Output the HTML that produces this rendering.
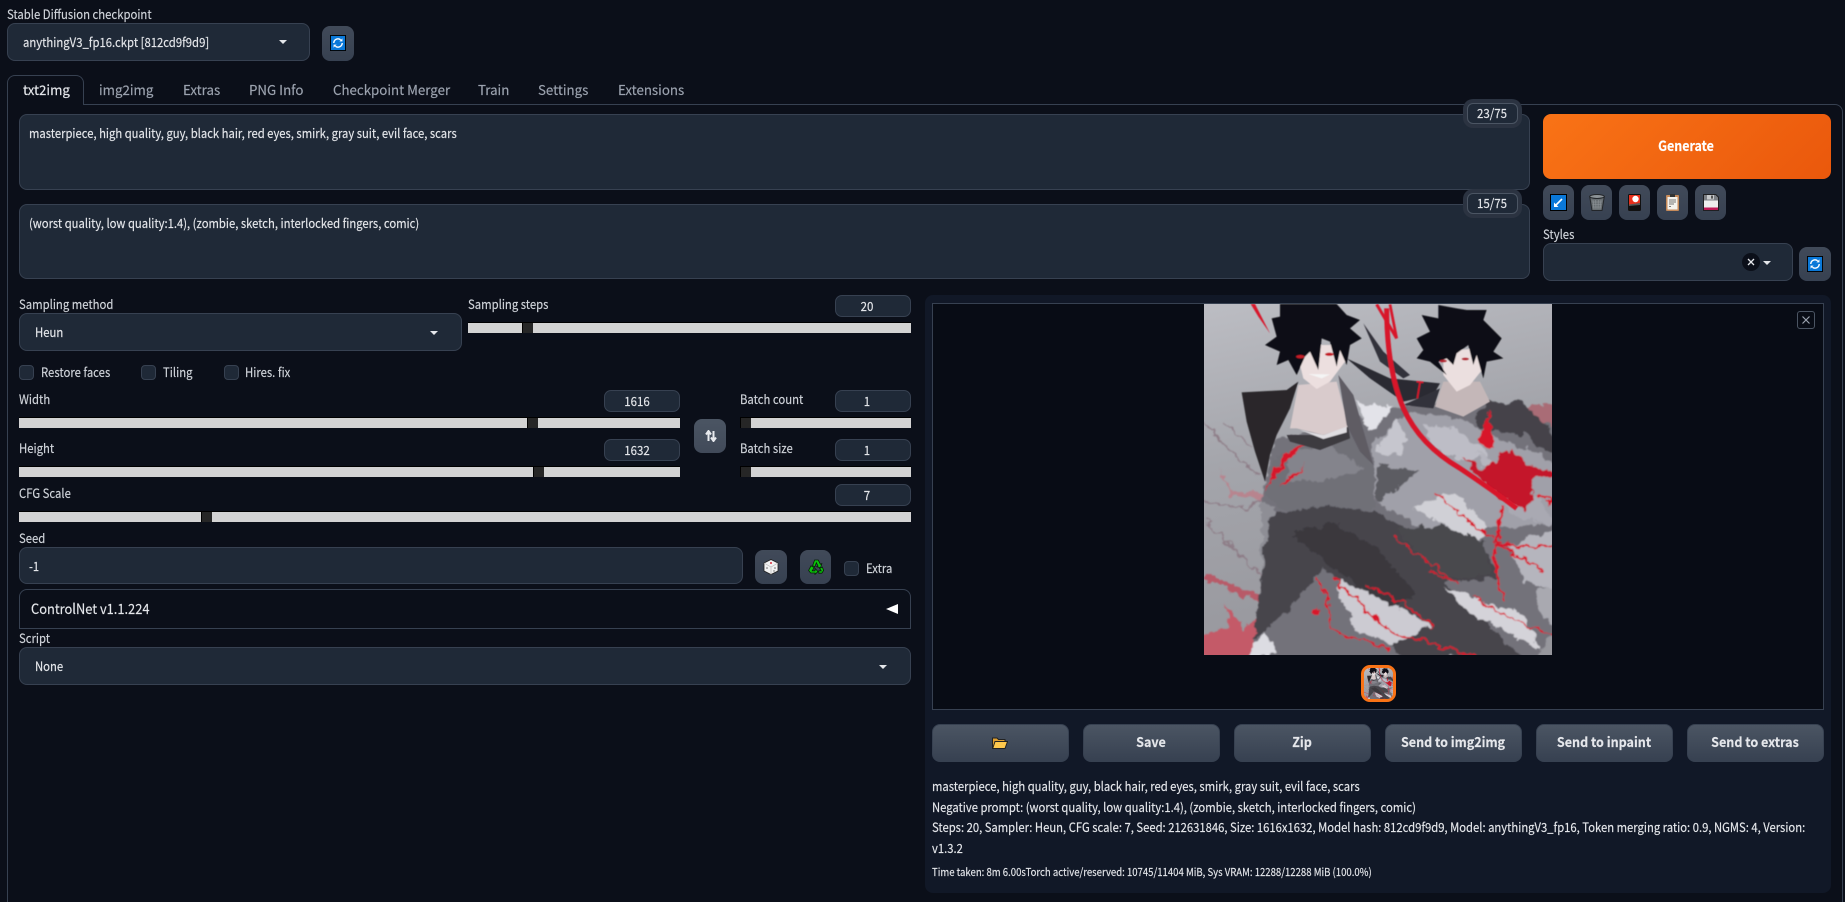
<!DOCTYPE html>
<html lang="en"><head><meta charset="utf-8"><title>Stable Diffusion</title>
<style>
html,body{margin:0;padding:0;background:#0b0f19;width:1845px;height:902px;overflow:hidden}
body{position:relative;font-family:"Noto Sans CJK SC","Liberation Sans",sans-serif;color:#d1d5db;font-size:12.5px}
div,svg,span{position:absolute;box-sizing:border-box}
.t{white-space:nowrap;line-height:20px;height:20px;-webkit-text-stroke:.15px currentColor}
.l{color:#d1d5db;font-size:12.5px;transform:scaleX(.905);transform-origin:0 50%}
.tab{color:#9ca3af;font-size:13.5px;transform:scaleX(.985);transform-origin:0 50%}
.box{background:#1f2937;border:1px solid #374151;border-radius:8px}
.num{background:#1f2937;border:1px solid #374151;border-radius:7px;height:22px;width:76px}
.val{color:#e5e7eb;font-size:12.5px;transform:translateX(-50%) scaleX(.92)}
.btn{border:1px solid #374151;border-radius:8px;background:linear-gradient(180deg,#4b5563,#374151)}
.ib{border-radius:8px;background:linear-gradient(180deg,#414a59,#374151)}
.cb{width:15px;height:15px;background:#1f2937;border:1px solid #374151;border-radius:4px}
.tr{height:11px;background:#d3d3d3;border-top:1px solid #000}
.th{width:11px;height:11px;background:#262626;border-left:1px solid #000;border-top:1px solid #000}
.arr{width:0;height:0;border-left:4px solid transparent;border-right:4px solid transparent;border-top:4px solid #e5e7eb}
.bt{font-weight:700;color:#e5e7eb;font-size:13.5px;transform:translateX(-50%) scaleX(.93)}
.cnt{background:#1f2937;border:1px solid #4b5563;border-radius:6px;width:51px;height:21px;box-shadow:0 0 0 4px #2b3341}
.info{color:#e5e7eb;font-size:12.5px;transform:scaleX(.9);transform-origin:0 50%}
</style></head><body>
<svg width="0" height="0" style="left:0;top:0">
<defs>
<linearGradient id="bg" x1="0" y1="0" x2="0.2" y2="1"><stop offset="0" stop-color="#bcbdc3"/><stop offset=".45" stop-color="#a4a5ab"/><stop offset="1" stop-color="#97979d"/></linearGradient>
<filter id="sb" x="-3%" y="-3%" width="106%" height="106%"><feTurbulence type="fractalNoise" baseFrequency=".035" numOctaves="3" seed="7" result="n"/><feDisplacementMap in="SourceGraphic" in2="n" scale="34" xChannelSelector="R" yChannelSelector="G"/><feGaussianBlur stdDeviation="2"/></filter>
<filter id="hb" x="-3%" y="-3%" width="106%" height="106%"><feGaussianBlur stdDeviation="1.4"/></filter>
<symbol id="art" viewBox="42 27 1044 1053" preserveAspectRatio="none">
<rect x="42" y="27" width="1044" height="1053" fill="url(#bg)"/>
<g filter="url(#sb)">
<g fill="none" stroke="#8d7c86" stroke-width="5"><path d="M42 380L120 470L210 545"/><path d="M42 620L170 640L220 610"/><path d="M42 670L150 780L215 840"/><path d="M110 380L190 460"/></g>
<path d="M85 520L130 590L220 590L215 615L125 600Z" fill="#b8848e"/>
<path d="M42 835L215 905L215 925L42 855Z" fill="#b85a68"/>
<path d="M30 1090V1015L120 1000L105 930L160 1000L232 945L220 1040L400 1030L540 1090Z" fill="#c45a68"/>
<path d="M1000 335H1100V430L1030 370Z" fill="#a96c76"/>
<path d="M215 600L260 430L480 390L560 340L700 330L900 320L1100 400V1000L1040 1090H200L190 1040L260 920L215 900Z" fill="#73727a"/>
<path d="M215 620L260 640L250 900L215 900Z" fill="#8e8e95"/>
<path d="M545 450L650 350L800 370L950 440L1100 500V680L960 700L700 700L560 620Z" fill="#a0a0a9"/>
<path d="M560 470L620 370L650 420L640 480Z" fill="#c6c6ce"/>
<path d="M700 390L800 400L900 480L820 500L730 460Z" fill="#bdbdc6"/>
<path d="M665 640L790 590L900 700L860 735Z" fill="#d0d0d6"/>
<path d="M860 470L1010 530L1010 590L900 540Z" fill="#b5b5be"/>
<path d="M930 590L1040 600L1100 690L960 660Z" fill="#a9a9b2"/>
<path d="M960 750L1100 700V890L1000 860Z" fill="#b5b5bd"/>
<path d="M260 480L400 440L480 400L550 510L555 640L300 660L225 600Z" fill="#706f77"/>
<path d="M300 470L420 450L520 520L400 560L290 560Z" fill="#84848c"/>
<path d="M560 510L690 530L560 620Z" fill="#5c5b62"/>
<path d="M240 660L400 630L560 650L700 730L800 720L880 760L930 850L760 860L1000 1090H640L470 880L400 820L300 940L190 1040L220 800Z" fill="#47454b"/>
<path d="M620 700L760 690L880 740L900 840L760 850Z" fill="#4a484e"/>
<path d="M300 720L430 680L560 760L680 900L600 940L450 830Z" fill="#3a383d"/>
<path d="M190 1060L225 1015L262 1075L175 1090Z" fill="#dcdce2"/>
<path d="M450 850L520 885L725 990L610 1052L500 1000L440 900Z" fill="#cccbd2"/>
<path d="M760 880L900 925L1000 950L1050 1070L1000 1040L850 960Z" fill="#d4d3d9"/>
<path d="M1040 880H1100V1000L1040 950Z" fill="#a9a9b0"/>
<path d="M500 320L610 330L560 400L540 410Z" fill="#e3e3e9"/>
<path d="M850 360L900 320L1000 320L1100 430V490L1000 420L870 400Z" fill="#44434a"/>
<g fill="#d8142a">
<path d="M820 490L880 520L960 460L1020 510L1100 545L1020 550L1030 610L1000 650L960 620L900 580L860 540Z" fill="#c4162a"/>
<path d="M865 450L900 340L905 450L915 462Z"/>
<path d="M222 590L280 480L360 430L300 490Z"/>
<path d="M265 575L345 505L300 560Z"/>
<path d="M360 955L385 930L390 965Z"/>
</g>
<g fill="none" stroke="#d8142a">
<path d="M730 590Q830 680 910 730" stroke-width="6"/>
<path d="M935 630L912 800L940 920" stroke-width="9"/>
<path d="M910 745L1100 760" stroke-width="7"/>
<path d="M920 740L1060 830" stroke-width="7"/>
<path d="M1040 600L1100 625" stroke-width="9"/>
<path d="M430 850Q520 930 600 1010Q700 1040 880 1090" stroke-width="7"/>
<path d="M530 870Q640 920 730 990" stroke-width="6"/>
<path d="M610 730Q720 800 790 860" stroke-width="4"/>
<path d="M850 900Q950 980 1100 1020" stroke-width="5"/>
<path d="M380 850Q430 930 420 1000Q500 1040 600 1060" stroke-width="5"/>
<path d="M720 830L800 860" stroke-width="4"/>
</g>
</g>
<g filter="url(#hb)">
<path d="M300 400L325 270L440 260L475 395L400 420L320 400Z" fill="#d9cbcc"/>
<path d="M290 420L400 420L475 395L480 430L390 465L300 440Z" fill="#3c3a40"/>
<path d="M330 405L400 420L470 395L470 412L400 432Z" fill="#e0dee2"/>
<path d="M155 292L290 285L325 260L300 340L260 420L240 480L225 560L195 470L170 380Z" fill="#29282c"/>
<path d="M445 240L490 300L550 510L510 470L470 390Z" fill="#5e5c64"/>
<path d="M470 190L600 250L750 265L730 300L640 320L540 250Z" fill="#2a2a32"/>
<path d="M520 85L580 170L660 240L640 250L570 200Z" fill="#33303a"/>
<path d="M735 335L760 260L870 260L900 320L820 365Z" fill="#c4b7b8"/>
<path d="M640 330L750 280L730 340Z" fill="#33323a"/>
<path d="M315 150H460L465 200L420 260L380 282L340 250Z" fill="#ecdfdf"/>
<path d="M270 27H440L470 60L510 75L480 100L515 130L480 150L470 210L450 165L440 215L420 140L395 130L385 225L360 170L345 185L320 240L295 195L260 210L270 170L225 150L260 125L245 70L270 65Z" fill="#0f0f13"/>
<ellipse cx="331" cy="185" rx="13" ry="5" fill="#c41a28"/><ellipse cx="418" cy="178" rx="13" ry="5" fill="#c41a28"/>
<path d="M355 237L420 238L395 250Z" fill="#f4f4f4"/>
<path d="M760 170L860 160L880 220L840 270L800 290L760 240Z" fill="#ebdfdf"/>
<path d="M800 40L830 45L890 45L880 75L935 130L910 170L940 190L890 200L880 250L860 180L850 210L835 150L800 175L790 210L770 190L745 200L770 240L720 200L680 190L700 165L680 130L720 110L695 60L745 70L745 30Z" fill="#0f0f13"/>
<ellipse cx="760" cy="198" rx="11" ry="4" fill="#b4202e"/><ellipse cx="826" cy="192" rx="11" ry="4" fill="#b4202e"/>
<path d="M182 27L195 27L240 115L205 65Z" fill="#d8142a"/>
<g fill="none" stroke="#d8142a">
<path d="M590 40Q590 220 640 340Q690 450 810 520Q900 580 980 640" stroke-width="15"/>
<path d="M560 28L620 130" stroke-width="9"/>
<path d="M600 28L620 130" stroke-width="8"/>
<path d="M680 260L700 262M690 262L682 310" stroke-width="5"/>
</g>
</g>
</symbol>
<symbol id="refresh" viewBox="0 0 17 17"><rect width="17" height="17" fill="#000"/><rect x="1" y="1" width="15" height="15" fill="#0a78d8"/><g fill="none" stroke="#fff" stroke-width="1.5"><path d="M4 8.5a4.5 4.5 0 0 1 7.3-3.4"/><path d="M13 8.5a4.5 4.5 0 0 1-7.3 3.4"/></g><path d="M10 6.8h3.2V3.6z M7 10.2H3.8v3.2z" fill="#fff"/></symbol>
</defs></svg>

<div class="t l" style="left:7px;top:4px">Stable Diffusion checkpoint</div>
<div class="box" style="left:7px;top:23px;width:303px;height:38px"></div>
<div class="t l" style="left:23px;top:32px;color:#e5e7eb">anythingV3_fp16.ckpt [812cd9f9d9]</div>
<div class="arr" style="left:279px;top:40px"></div>
<div class="ib" style="left:322px;top:26px;width:32px;height:35px"></div>
<svg width="16" height="16" style="left:330px;top:35px"><use href="#refresh" width="16" height="16"/></svg>

<!-- tabs -->
<div style="left:7px;top:104px;width:1836px;height:810px;border:1px solid #374151;border-radius:0 8px 8px 8px"></div>
<div style="left:7px;top:75px;width:77px;height:30px;background:#0b0f19;border:1px solid #374151;border-bottom:none;border-radius:8px 8px 0 0"></div>
<div class="t tab" style="left:23px;top:79px;color:#e5e7eb">txt2img</div>
<div class="t tab" style="left:99px;top:79px">img2img</div>
<div class="t tab" style="left:183px;top:79px">Extras</div>
<div class="t tab" style="left:249px;top:79px">PNG Info</div>
<div class="t tab" style="left:333px;top:79px">Checkpoint Merger</div>
<div class="t tab" style="left:478px;top:79px">Train</div>
<div class="t tab" style="left:538px;top:79px">Settings</div>
<div class="t tab" style="left:618px;top:79px">Extensions</div>

<!-- prompts -->
<div class="box" style="left:19px;top:114px;width:1511px;height:76px"></div>
<div class="t info" style="left:29px;top:123px">masterpiece, high quality, guy, black hair, red eyes, smirk, gray suit, evil face, scars</div>
<div class="box" style="left:19px;top:204px;width:1511px;height:75px"></div>
<div class="t info" style="left:29px;top:213px">(worst quality, low quality:1.4), (zombie, sketch, interlocked fingers, comic)</div>
<div class="cnt" style="left:1467px;top:103px"></div>
<div class="t val" style="left:1492px;top:103px">23/75</div>
<div class="cnt" style="left:1467px;top:193px"></div>
<div class="t val" style="left:1492px;top:193px">15/75</div>

<!-- generate -->
<div style="left:1543px;top:114px;width:288px;height:65px;border-radius:8px;background:linear-gradient(135deg,#f97316,#ea580c)"></div>
<div class="t" style="left:1686px;top:136px;transform:translateX(-50%) scaleX(.89);font-weight:700;color:#fff;font-size:14px">Generate</div>

<div class="ib" style="left:1543px;top:185px;width:31px;height:35px"></div>
<div class="ib" style="left:1581px;top:185px;width:31px;height:35px"></div>
<div class="ib" style="left:1619px;top:185px;width:31px;height:35px"></div>
<div class="ib" style="left:1657px;top:185px;width:31px;height:35px"></div>
<div class="ib" style="left:1695px;top:185px;width:31px;height:35px"></div>
<svg width="17" height="17" viewBox="0 0 17 17" style="left:1550px;top:194px"><rect width="17" height="17" fill="#000"/><rect x="1" y="1" width="15" height="15" fill="#0a78d8"/><path d="M12 5L6 11" stroke="#fff" stroke-width="1.6"/><path d="M4 13V8.5L8.5 13Z" fill="#fff"/></svg>
<svg width="16" height="17" viewBox="0 0 16 17" style="left:1589px;top:194px"><path d="M.7 2.5L3 16.5H13L15.3 2.5Z" fill="#686e72" stroke="#23262a"/><ellipse cx="8" cy="2.5" rx="7.3" ry="2" fill="#8d9397" stroke="#23262a"/><path d="M4 6L5 15M6.7 6L7 15M9.3 6L9 15M12 6L11 15M3 8H13M3.5 10.5H12.5M4 13H12" stroke="#8e9498" stroke-width=".6"/></svg>
<svg width="13" height="17" viewBox="0 0 13 17" style="left:1628px;top:194px"><rect width="13" height="17" rx="1.5" fill="#111"/><rect x="1" y="1" width="11" height="9.5" fill="#e8301c"/><circle cx="7.5" cy="5" r="3.2" fill="#fff"/><path d="M1 10.5L12 9V11L1 12Z" fill="#555"/></svg>
<svg width="13" height="17" viewBox="0 0 13 17" style="left:1666px;top:194px"><rect y="1" width="13" height="16" rx="1" fill="#c58a5a"/><rect x="1.5" y="3" width="10" height="12.5" fill="#f5f3ee"/><rect x="4" width="5" height="3" fill="#333"/><path d="M3 6H10M3 8H10M3 10H8M3 12.5H5" stroke="#777" stroke-width="1"/></svg>
<svg width="16" height="17" viewBox="0 0 16 17" style="left:1703px;top:194px"><path d="M0 0H13L16 3V17H0Z" fill="#1f1f22"/><path d="M1 1H12.5L15 3.5V6.5H1Z" fill="#7c7f84"/><rect x="4" y="1" width="7" height="4.5" fill="#c8cacc"/><rect x="8" y="1.6" width="2" height="3" fill="#555"/><rect x="1" y="6.5" width="14" height="7" fill="#eeeeee"/><rect x="1" y="13.5" width="14" height="2.5" fill="#c01a58"/></svg>

<div class="t l" style="left:1543px;top:224px">Styles</div>
<div class="box" style="left:1543px;top:243px;width:250px;height:38px"></div>
<div style="left:1742px;top:253px;width:18px;height:18px;border-radius:50%;background:#0b0f19"></div>
<svg width="8" height="8" viewBox="0 0 8 8" style="left:1747px;top:258px"><path d="M1 1L7 7M7 1L1 7" stroke="#e5e7eb" stroke-width="1.3"/></svg>
<div class="arr" style="left:1763px;top:261px"></div>
<div class="ib" style="left:1799px;top:247px;width:32px;height:34px"></div>
<svg width="16" height="16" style="left:1807px;top:256px"><use href="#refresh" width="16" height="16"/></svg>

<!-- left column -->
<div class="t l" style="left:19px;top:294px">Sampling method</div>
<div class="box" style="left:19px;top:313px;width:443px;height:38px"></div>
<div class="t l" style="left:35px;top:322px;color:#e5e7eb">Heun</div>
<div class="arr" style="left:430px;top:331px"></div>
<div class="t l" style="left:468px;top:294px">Sampling steps</div>
<div class="num" style="left:835px;top:295px"></div>
<div class="t val" style="left:867px;top:296px">20</div>
<div class="tr" style="left:468px;top:322px;width:443px"></div>
<div class="th" style="left:522px;top:322px"></div>

<div class="cb" style="left:19px;top:365px"></div><div class="t l" style="left:41px;top:362px">Restore faces</div>
<div class="cb" style="left:141px;top:365px"></div><div class="t l" style="left:163px;top:362px">Tiling</div>
<div class="cb" style="left:224px;top:365px"></div><div class="t l" style="left:245px;top:362px">Hires. fix</div>

<div class="t l" style="left:19px;top:389px">Width</div>
<div class="num" style="left:604px;top:390px"></div>
<div class="t val" style="left:637px;top:391px">1616</div>
<div class="tr" style="left:19px;top:417px;width:661px"></div>
<div class="th" style="left:527px;top:417px"></div>

<div class="t l" style="left:19px;top:438px">Height</div>
<div class="num" style="left:604px;top:439px"></div>
<div class="t val" style="left:637px;top:440px">1632</div>
<div class="tr" style="left:19px;top:466px;width:661px"></div>
<div class="th" style="left:533px;top:466px"></div>

<div class="ib" style="left:694px;top:419px;width:32px;height:34px;background:linear-gradient(180deg,#4b5563,#414a59)"></div>
<svg width="12" height="12" viewBox="0 0 12 12" style="left:705px;top:430px"><path d="M3.5 11V3M1 4.5L3.5 1L6 4.5M8.5 1V9M6 7.5L8.5 11L11 7.5" fill="none" stroke="#e8eaee" stroke-width="2"/></svg>

<div class="t l" style="left:740px;top:389px">Batch count</div>
<div class="num" style="left:835px;top:390px"></div>
<div class="t val" style="left:867px;top:391px">1</div>
<div class="tr" style="left:740px;top:417px;width:171px"></div>
<div class="th" style="left:740px;top:417px"></div>
<div class="t l" style="left:740px;top:438px">Batch size</div>
<div class="num" style="left:835px;top:439px"></div>
<div class="t val" style="left:867px;top:440px">1</div>
<div class="tr" style="left:740px;top:466px;width:171px"></div>
<div class="th" style="left:740px;top:466px"></div>

<div class="t l" style="left:19px;top:483px">CFG Scale</div>
<div class="num" style="left:835px;top:484px"></div>
<div class="t val" style="left:867px;top:485px">7</div>
<div class="tr" style="left:19px;top:511px;width:892px"></div>
<div class="th" style="left:201px;top:511px"></div>

<div class="t l" style="left:19px;top:528px">Seed</div>
<div class="box" style="left:19px;top:547px;width:724px;height:37px"></div>
<div class="t l" style="left:29px;top:556px;color:#e5e7eb">-1</div>
<div class="ib" style="left:755px;top:550px;width:32px;height:34px"></div>
<svg width="16" height="16" viewBox="0 0 16 16" style="left:763px;top:559px"><path d="M8 .5L15 4V12L8 15.5L1 12V4Z" fill="#f2f2f2" stroke="#222" stroke-width=".8"/><path d="M1 4L8 8L15 4M8 8V15.5" stroke="#b8b8b8" stroke-width=".7" fill="none"/><circle cx="8" cy="4" r="1" fill="#d8303c"/><circle cx="4" cy="9" r=".8" fill="#666"/><circle cx="12" cy="9" r=".8" fill="#666"/><circle cx="11" cy="12" r=".7" fill="#666"/></svg>
<div class="ib" style="left:800px;top:550px;width:31px;height:34px"></div>
<svg width="16" height="16" viewBox="0 0 16 16" style="left:808px;top:559px"><g fill="#0ac40a" stroke="#062006" stroke-width=".8"><path d="M4.6 6.6L6.6 1H10.2L12.4 5.2L13.8 4.6L12.6 8.8L8.6 7.8L10 7.1L8.4 3.8L6.8 7.8Z"/><path d="M.6 11.4L3 6.8L6.2 8.6L4.2 11.8H7V9.4L10 12.6L7 15.4V14H2.6Z"/><path d="M10.8 14.2V11.8H13.2L11.6 9.4L14.4 8L15.6 11.5L13.8 14.2Z"/></g></svg>
<div class="cb" style="left:844px;top:561px"></div><div class="t l" style="left:866px;top:558px">Extra</div>

<div style="left:19px;top:589px;width:892px;height:40px;border:1px solid #374151;border-radius:8px 8px 0 0"></div>
<div class="t" style="left:31px;top:599px;color:#e5e7eb;font-size:14px;transform:scaleX(.918);transform-origin:0 50%">ControlNet v1.1.224</div>
<div style="left:886px;top:603.5px;width:0;height:0;border-top:5.5px solid transparent;border-bottom:5.5px solid transparent;border-right:12px solid #fff"></div>

<div class="t l" style="left:19px;top:628px">Script</div>
<div class="box" style="left:19px;top:647px;width:892px;height:38px"></div>
<div class="t l" style="left:35px;top:656px;color:#e5e7eb">None</div>
<div class="arr" style="left:879px;top:665px"></div>

<!-- right panel -->
<div style="left:925px;top:295px;width:906px;height:598px;background:#111827;border-radius:8px"></div>
<div style="left:932px;top:303px;width:892px;height:407px;background:#080c15;border:1px solid #374151"></div>
<svg width="348" height="351" style="left:1204px;top:304px"><use href="#art" width="348" height="351"/></svg>
<div style="left:1797px;top:311px;width:18px;height:18px;border:1px solid #4b5563;border-radius:3px"></div>
<svg width="8" height="8" viewBox="0 0 8 8" style="left:1802px;top:316px"><path d="M.5 .5L7.5 7.5M7.5 .5L.5 7.5" stroke="#9ca3af" stroke-width="1.2"/></svg>
<div style="left:1361px;top:665px;width:35px;height:37px;border:3px solid #f97316;border-radius:9px;overflow:hidden;background:#9a9aa0"><svg width="29" height="31" style="left:0;top:0"><use href="#art" width="29" height="31"/></svg></div>

<div class="btn" style="left:932px;top:724px;width:137px;height:38px"></div>
<svg width="16" height="12" viewBox="0 0 16 12" style="left:992px;top:737px"><path d="M.5 11.5V1H5L6.5 2.5H13V4" fill="#e0a030" stroke="#222"/><path d="M.7 11.5L3 4.5H15.5L13 11.5Z" fill="#ffc94d" stroke="#222"/></svg>
<div class="btn" style="left:1083px;top:724px;width:137px;height:38px"></div>
<div class="t bt" style="left:1151px;top:731px">Save</div>
<div class="btn" style="left:1234px;top:724px;width:137px;height:38px"></div>
<div class="t bt" style="left:1302px;top:731px">Zip</div>
<div class="btn" style="left:1385px;top:724px;width:137px;height:38px"></div>
<div class="t bt" style="left:1453px;top:731px">Send to img2img</div>
<div class="btn" style="left:1536px;top:724px;width:137px;height:38px"></div>
<div class="t bt" style="left:1604px;top:731px">Send to inpaint</div>
<div class="btn" style="left:1687px;top:724px;width:137px;height:38px"></div>
<div class="t bt" style="left:1755px;top:731px">Send to extras</div>

<div class="t info" style="left:932px;top:776px">masterpiece, high quality, guy, black hair, red eyes, smirk, gray suit, evil face, scars</div>
<div class="t info" style="left:932px;top:797px">Negative prompt: (worst quality, low quality:1.4), (zombie, sketch, interlocked fingers, comic)</div>
<div class="t info" style="left:932px;top:817px">Steps: 20, Sampler: Heun, CFG scale: 7, Seed: 212631846, Size: 1616x1632, Model hash: 812cd9f9d9, Model: anythingV3_fp16, Token merging ratio: 0.9, NGMS: 4, Version:</div>
<div class="t info" style="left:932px;top:838px">v1.3.2</div>
<div class="t info" style="left:932px;top:862px;font-size:11px;transform:scaleX(.87)">Time taken: 8m 6.00sTorch active/reserved: 10745/11404 MiB, Sys VRAM: 12288/12288 MiB (100.0%)</div>
</body></html>
